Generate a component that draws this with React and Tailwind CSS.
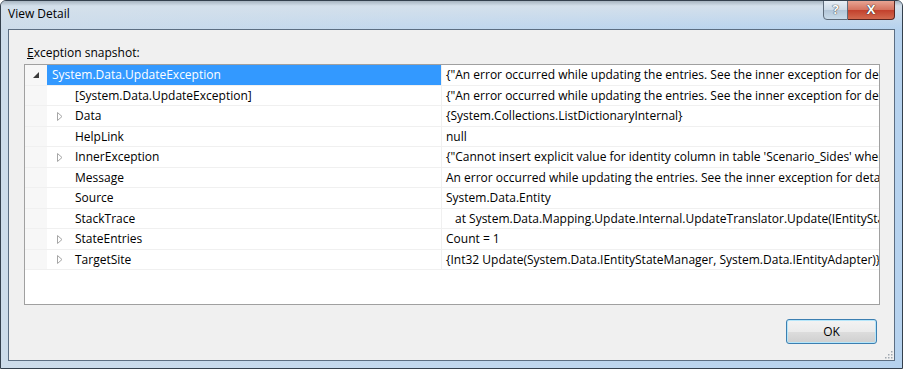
import React from 'react';

const font = { fontFamily: '"Open Sans", "Noto Sans", sans-serif' };

const rows = [
  { name: 'System.Data.UpdateException', value: '{"An error occurred while updating the entries. See the inner exception for details."}', root: true },
  { name: '[System.Data.UpdateException]', value: '{"An error occurred while updating the entries. See the inner exception for details."}' },
  { name: 'Data', value: '{System.Collections.ListDictionaryInternal}', expand: true },
  { name: 'HelpLink', value: 'null' },
  { name: 'InnerException', value: "{\"Cannot insert explicit value for identity column in table 'Scenario_Sides' when IDENTITY_INSERT is set to OFF.\"}", expand: true },
  { name: 'Message', value: 'An error occurred while updating the entries. See the inner exception for details.' },
  { name: 'Source', value: 'System.Data.Entity' },
  { name: 'StackTrace', value: 'at System.Data.Mapping.Update.Internal.UpdateTranslator.Update(IEntityStateManager stateManager, IEntityAdapter adapter)', indent: true },
  { name: 'StateEntries', value: 'Count = 1', expand: true },
  { name: 'TargetSite', value: '{Int32 Update(System.Data.IEntityStateManager, System.Data.IEntityAdapter)}', expand: true },
];

function Expander() {
  return (
    <svg width="6" height="9" viewBox="0 0 6 9" className="shrink-0">
      <path d="M0.5 0.5 L5 4.5 L0.5 8.5 Z" fill="white" stroke="#a6a6a6" strokeWidth="1" />
    </svg>
  );
}

function Row({ row, i }) {
  return (
    <div className={`flex border-b border-[#f0f0f0] ${i % 2 === 0 ? 'h-[21px]' : 'h-[20px]'}`}>
      <div className="w-[22px] shrink-0 bg-[#f7f7f7] flex items-center justify-end pr-[8px]">
        {row.root && (
          <svg width="6" height="6" viewBox="0 0 6 6">
            <path d="M6 0 L6 6 L0 6 Z" fill="#3a3a3a" />
          </svg>
        )}
      </div>
      <div
        className={`w-[395px] shrink-0 flex items-center border-r border-[#f0f0f0] whitespace-nowrap overflow-hidden ${
          row.root ? 'bg-[#3399ff] text-white pl-[5px]' : 'pl-[10px]'
        }`}
      >
        {!row.root && (
          <div className="w-[18px] shrink-0 flex items-center">{row.expand && <Expander />}</div>
        )}
        <span>{row.name}</span>
      </div>
      <div className={`flex-1 flex items-center whitespace-nowrap overflow-hidden ${row.indent ? 'pl-[13px]' : 'pl-[4px]'}`}>
        {row.value}
      </div>
    </div>
  );
}

export default function App() {
  return (
    <div
      className="w-[903px] h-[369px] flex flex-col border border-[#34404d] rounded-t-[6px] overflow-hidden bg-[linear-gradient(to_right,#cddcea,#c2d8ee_45%,#b6d2ee)] text-[12px] text-black"
      style={font}
    >
      {/* title bar */}
      <div className="h-[28px] shrink-0 flex items-start bg-[linear-gradient(to_bottom,#a7b4c0_0px,#d4e0eb_5px,transparent_28px)]">
        <span className="pl-[7px] pt-[5px] leading-[16px]">View Detail</span>
        <div className="ml-auto mr-[7px] flex -mt-[1px]">
          <div className="w-[25px] h-[20px] border border-[#5d6b7a] rounded-bl-[4px] bg-[linear-gradient(to_bottom,#e7eef5,#cbd9e6_50%,#b3c6d8_51%,#c9dbea)] flex items-center justify-center text-white font-bold text-[13px] [text-shadow:0_0_1px_#333,0_0_1px_#333]">
            ?
          </div>
          <div className="w-[47px] h-[20px] border border-l-0 border-[#5a2520] rounded-br-[4px] bg-[linear-gradient(to_bottom,#e8a493,#d4715d_50%,#c2402c_51%,#d26a4f)] flex items-center justify-center text-white font-bold text-[13px] [text-shadow:0_0_1px_#222,0_0_1px_#222]">
            X
          </div>
        </div>
      </div>

      {/* client area */}
      <div className="flex-1 mx-[7px] mb-[7px] border border-[#5c6e82] bg-[#f0f0f0] flex flex-col relative">
        <div className="ml-[18px] mt-[15px] leading-[16px]">
          <span className="underline">E</span>xception snapshot:
        </div>
        <div className="ml-[15px] mt-[3px] w-[856px] h-[241px] border border-[#a0a0a0] bg-white flex flex-col overflow-hidden">
          {rows.map((r, i) => (
            <Row key={r.name} row={r} i={i} />
          ))}
        </div>
        <div className="flex justify-end mt-[14px] mr-[17px]">
          <button className="w-[91px] h-[25px] rounded-[3px] border border-[#3c7fb1] shadow-[inset_0_0_0_1px_#b5e6fa] bg-[linear-gradient(to_bottom,#f3f3f3,#ebebeb_50%,#dddddd_51%,#cfcfcf)] flex items-center justify-center">
            OK
          </button>
        </div>
        <svg width="10" height="10" viewBox="0 0 10 10" className="absolute right-[1px] bottom-[1px]">
          {[[8, 2], [8, 5], [5, 5], [8, 8], [5, 8], [2, 8]].map(([x, y]) => (
            <rect key={`${x}-${y}`} x={x} y={y} width="1.5" height="1.5" fill="#a0a8b0" />
          ))}
        </svg>
      </div>
    </div>
  );
}
